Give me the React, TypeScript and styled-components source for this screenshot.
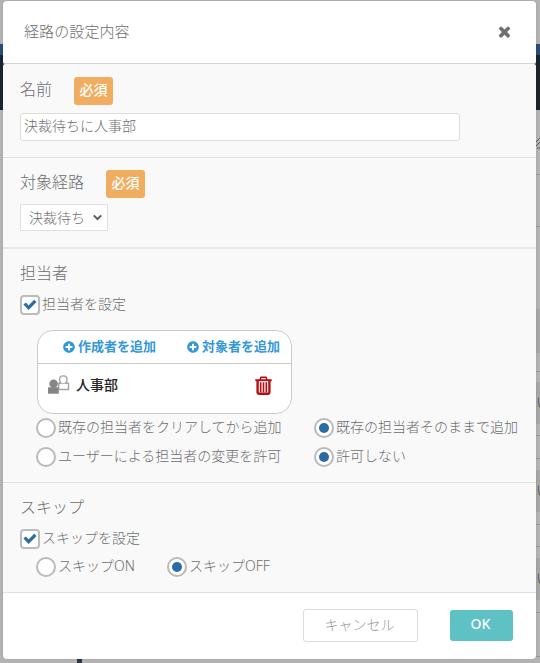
import React from "react";
import styled, { createGlobalStyle, css } from "styled-components";
import { FaPlusCircle } from "react-icons/fa";

const GlobalStyle = createGlobalStyle`
  *, *::before, *::after { box-sizing: border-box; }
  html, body { margin: 0; padding: 0; height: 663px; overflow: hidden; background: #b3b3b3; }
  body, button, input {
    font-family: "Noto Sans", "Noto Sans CJK JP", sans-serif;
    font-size: 14px;
    font-weight: 300;
    color: #6c6d70;
  }
`;

const Page = styled.div`
  position: relative;
  width: 540px;
  height: 663px;
  overflow: hidden;
`;

const Backdrop = styled.div`
  display: flex;
  flex-direction: column;
  height: 663px;
  background: #b3b3b3;
`;

const Band = styled.div<{ $h: number; $bg?: string; $line?: boolean; $right?: boolean }>`
  display: flex;
  justify-content: flex-end;
  flex: none;
  height: ${(p) => p.$h}px;
  margin-left: ${(p) => (p.$right || p.$line ? 500 : 0)}px;
  background: ${(p) => p.$bg ?? "transparent"};
  ${(p) => p.$line && css`border-bottom: 1px solid #989898;`}
`;

const Peek = styled.span`
  width: 4px;
  height: 100%;
  color: #444;
  font-size: 14px;
  line-height: 40px;
`;

const Handle = styled.svg`
  width: 4px;
  height: 12px;
  margin-top: 27px;
`;

const Mark = styled.div`
  width: 5px;
  height: 6px;
  margin: 0 auto 0 77px;
  background: #2c343d;
`;

const Dialog = styled.section`
  position: absolute;
  left: 3px;
  top: 1px;
  width: 533px;
  height: 658px;
  display: flex;
  flex-direction: column;
  border-radius: 4px;
  box-shadow: 0 0 2px rgba(0, 0, 0, 0.15);
`;

const Header = styled.header`
  display: flex;
  align-items: center;
  justify-content: space-between;
  height: 63px;
  padding: 0 23px 2px 21px;
  background: #fff;
  border-bottom: 1px solid #d4d4d4;
  border-radius: 4px 4px 2px 2px;
`;

const Title = styled.h1`
  margin: 0;
  font-size: 15px;
  font-weight: 300;
  letter-spacing: 0.1px;
  line-height: 20px;
`;

const CloseButton = styled.button`
  display: flex;
  padding: 0;
  border: 0;
  background: none;
  color: #6f7073;
`;

const Body = styled.div`
  flex: 1;
  overflow: hidden;
  background: #f9f9f9;
  border-radius: 2px 2px 0 0;
`;

const Section = styled.section<{ $h: number; $pad: number; $line?: number }>`
  height: ${(p) => p.$h}px;
  padding: ${(p) => p.$pad}px 17px 0;
  border-bottom: ${(p) => p.$line ?? 1}px solid ${(p) => (p.$line ? "#e7e7e7" : "#e0e0e0")};
`;

const Heading = styled.h2`
  display: flex;
  align-items: flex-start;
  gap: 22px;
  margin: 0;
  height: 28px;
  font-size: 16px;
  font-weight: 300;
  line-height: 24px;
`;

const Required = styled.span`
  width: 39px;
  height: 28px;
  border-radius: 3px;
  background: #f0ad60;
  color: #fff;
  font-size: 14px;
  font-weight: 500;
  line-height: 26px;
  text-align: center;
`;

const TextInput = styled.input`
  display: block;
  width: 440px;
  height: 28px;
  margin-top: 8px;
  padding: 0 3px 4px;
  border: 1px solid #dcdcdc;
  border-radius: 3px;
  background: #fff;
  outline: 0;
`;

const Select = styled.div`
  display: flex;
  align-items: center;
  gap: 8px;
  width: 88px;
  height: 27px;
  margin-top: 6px;
  padding: 0 5px 0 8px;
  border: 1px solid #e0e0e0;
  background: #fff;
  line-height: 24px;
  white-space: nowrap;
`;

const Choice = styled.label`
  display: flex;
  align-items: center;
  gap: 2px;
  height: 20px;
  line-height: 20px;
  white-space: nowrap;
`;

const ChoiceText = styled.span`
  padding-bottom: 2px;
`;

const CheckBox = styled.span`
  display: grid;
  place-items: center;
  width: 20px;
  height: 20px;
  border: 2px solid #bcbcbc;
  border-radius: 4px;
  background: #fff;
`;

const Radio = styled.span<{ $on?: boolean }>`
  display: grid;
  place-items: center;
  width: 20px;
  height: 20px;
  border: 2px solid #bababa;
  border-radius: 50%;
  background: #fff;
  &::after {
    content: "";
    width: 10px;
    height: 10px;
    border-radius: 50%;
    background: ${(p) => (p.$on ? "#2b6ca3" : "transparent")};
  }
`;

const RadioRow = styled.div<{ $first: number; $top: number }>`
  display: grid;
  grid-template-columns: ${(p) => p.$first}px auto;
  margin: ${(p) => p.$top}px 0 0 16px;
`;

const Offset = styled.div`
  padding-top: 6px;
`;

const Assignees = styled.div`
  width: 255px;
  height: 84px;
  margin: 15px 0 0 17px;
  border: 1px solid #cbcbcb;
  border-radius: 16px;
  background: #fff;
`;

const AddBar = styled.div`
  display: flex;
  justify-content: flex-end;
  gap: 31px;
  height: 33px;
  padding-right: 11px;
  border-bottom: 1px solid #c8c8c8;
`;

const AddLink = styled.a`
  display: flex;
  align-items: center;
  gap: 3px;
  height: 31px;
  color: #3498d8;
  font-size: 13px;
  font-weight: 700;
  line-height: 20px;
  white-space: nowrap;
`;

const AddText = styled.span`
  padding-bottom: 2px;
`;

const Assignee = styled.div`
  display: flex;
  align-items: center;
  height: 42px;
  padding: 0 19px 0 10px;
`;

const AssigneeName = styled.span`
  flex: 1;
  margin-left: 6px;
  padding-bottom: 2px;
  color: #252525;
  font-weight: 500;
`;

const Footer = styled.footer`
  display: flex;
  align-items: flex-start;
  justify-content: flex-end;
  gap: 32px;
  height: 66px;
  padding: 16px 23px 0 0;
  background: #fff;
  border-radius: 0 0 4px 4px;
`;

const Button = styled.button<{ $primary?: boolean }>`
  width: ${(p) => (p.$primary ? 63 : 115)}px;
  height: ${(p) => (p.$primary ? 31 : 33)}px;
  margin-top: ${(p) => (p.$primary ? 1 : 0)}px;
  padding: 0 2px 4px 0;
  border: ${(p) => (p.$primary ? "0" : "1px solid #dcdcdc")};
  border-radius: 3px;
  background: ${(p) => (p.$primary ? "#5ec1c4" : "#fff")};
  color: ${(p) => (p.$primary ? "#fff" : "#999")};
  font-weight: ${(p) => (p.$primary ? 500 : 300)};
`;

const CloseIcon = () => (
  <svg width="17" height="17" viewBox="0 0 1792 1792" fill="currentColor">
    <path d="M1490 1322q0 40-28 68l-136 136q-28 28-68 28t-68-28l-294-294-294 294q-28 28-68 28t-68-28l-136-136q-28-28-28-68t28-68l294-294-294-294q-28-28-28-68t28-68l136-136q28-28 68-28t68 28l294 294 294-294q28-28 68-28t68 28l136 136q28 28 28 68t-28 68l-294 294 294 294q28 28 28 68z" />
  </svg>
);

const CheckIcon = () => (
  <svg width="14" height="12" viewBox="0 0 14 12" fill="#2b6ca3">
    <path d="M0.4 5.6L2.9 3.6L5.5 6.4L11.2 0.8L13.5 3L5.6 11Z" />
  </svg>
);

const ChevronIcon = () => (
  <svg width="10" height="7" viewBox="0 0 10 7" fill="none" stroke="#5c5e62" strokeWidth="2.2">
    <path d="M0.8 1.1L5 5.2L9.2 1.1" />
  </svg>
);

const PeopleIcon = () => (
  <svg width="22" height="20" viewBox="0 0 22 20">
    <g fill="#fff" stroke="#a3a3a3" strokeWidth="1.4">
      <path d="M10.7 8.3h9.8v6.2h-9.8z" />
      <path d="M13.2 8.3C11.3 6.5 11.1 3.6 12.2 2.1c1.2-1.6 5-1.6 6.2 0 1.1 1.5.9 4.4-1 6.2" />
    </g>
    <g fill="#858585">
      <circle cx="5.6" cy="8.8" r="4.3" />
      <path d="M0 12.3h10.8v6.4H0z" />
    </g>
  </svg>
);

const TrashIcon = () => (
  <svg width="17" height="19" viewBox="0 0 17 19" fill="none" stroke="#b90d14">
    <path d="M5 4L6 1.2h5L12 4" strokeWidth="1.6" />
    <path d="M0.3 4.2h16.4" strokeWidth="1.9" />
    <path d="M2.6 4.5v12c0 .8.4 1.2 1.2 1.2h9.4c.8 0 1.2-.4 1.2-1.2v-12" strokeWidth="2.4" />
    <path d="M5.7 6.2v10.2M8.5 6.2v10.2M11.3 6.2v10.2" strokeWidth="1.6" />
  </svg>
);

type RadioOptionProps = { text: string; on?: boolean };

const RadioOption = ({ text, on }: RadioOptionProps) => (
  <Choice>
    <Radio $on={on} />
    <ChoiceText>{text}</ChoiceText>
  </Choice>
);

const CheckOption = ({ text }: { text: string }) => (
  <Choice>
    <CheckBox>
      <CheckIcon />
    </CheckBox>
    <ChoiceText>{text}</ChoiceText>
  </Choice>
);

const AddAction = ({ text }: { text: string }) => (
  <AddLink>
    <FaPlusCircle size={12} />
    <AddText>{text}</AddText>
  </AddLink>
);

export default function App() {
  return (
    <Page>
      <GlobalStyle />
      <Backdrop aria-hidden>
        <Band $h={44} />
        <Band $h={11} $bg="#294d7b" />
        <Band $h={55} $bg="linear-gradient(90deg, #1b2436, #1c252b)" />
        <Band $h={65} $line>
          <Handle viewBox="0 0 4 12" fill="none" stroke="#555">
            <path d="M0 5L4 1M0 9L4 5M1 11H4" />
          </Handle>
        </Band>
        <Band $h={52} $line />
        <Band $h={82} />
        <Band $h={44} $right $bg="#a6a6a6" />
        <Band $h={19} $line />
        <Band $h={10} />
        <Band $h={42} $right $bg="#a6a6a6"><Peek>い</Peek></Band>
        <Band $h={12} $line />
        <Band $h={23} $line />
        <Band $h={11} />
        <Band $h={42} $right $bg="#a6a6a6"><Peek>い</Peek></Band>
        <Band $h={13} $line />
        <Band $h={22} $line />
        <Band $h={11} />
        <Band $h={42} $right $bg="#a6a6a6"><Peek>い</Peek></Band>
        <Band $h={13} $line />
        <Band $h={44} $line />
        <Band $h={6}><Mark /></Band>
      </Backdrop>

      <Dialog role="dialog">
        <Header>
          <Title>経路の設定内容</Title>
          <CloseButton aria-label="閉じる">
            <CloseIcon />
          </CloseButton>
        </Header>
        <Body>
          <Section $h={94} $pad={13}>
            <Heading>
              名前<Required>必須</Required>
            </Heading>
            <TextInput defaultValue="決裁待ちに人事部" />
          </Section>
          <Section $h={91} $pad={12} $line={2}>
            <Heading>
              対象経路<Required>必須</Required>
            </Heading>
            <Select>
              決裁待ち
              <ChevronIcon />
            </Select>
          </Section>
          <Section $h={234} $pad={12}>
            <Heading>担当者</Heading>
            <Offset>
              <CheckOption text="担当者を設定" />
            </Offset>
            <Assignees>
              <AddBar>
                <AddAction text="作成者を追加" />
                <AddAction text="対象者を追加" />
              </AddBar>
              <Assignee>
                <PeopleIcon />
                <AssigneeName>人事部</AssigneeName>
                <TrashIcon />
              </Assignee>
            </Assignees>
            <RadioRow $first={278} $top={4}>
              <RadioOption text="既存の担当者をクリアしてから追加" />
              <RadioOption text="既存の担当者そのままで追加" on />
            </RadioRow>
            <RadioRow $first={278} $top={9}>
              <RadioOption text="ユーザーによる担当者の変更を許可" />
              <RadioOption text="許可しない" on />
            </RadioRow>
          </Section>
          <Section $h={110} $pad={12}>
            <Heading>スキップ</Heading>
            <Offset>
              <CheckOption text="スキップを設定" />
            </Offset>
            <RadioRow $first={131} $top={8}>
              <RadioOption text="スキップON" />
              <RadioOption text="スキップOFF" on />
            </RadioRow>
          </Section>
        </Body>
        <Footer>
          <Button>キャンセル</Button>
          <Button $primary>OK</Button>
        </Footer>
      </Dialog>
    </Page>
  );
}
